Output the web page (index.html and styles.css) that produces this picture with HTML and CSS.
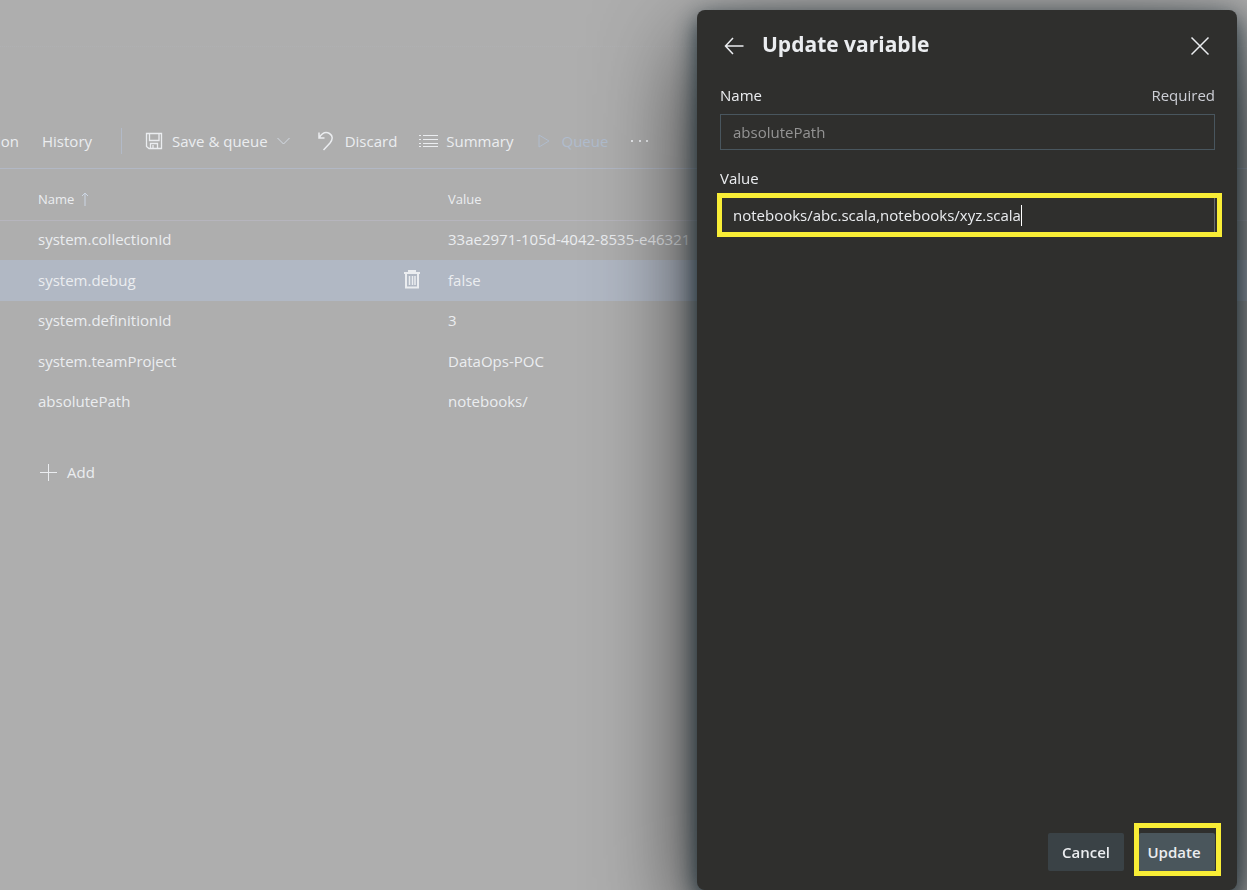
FILE: index.html
```html
<!DOCTYPE html>
<html lang="en">
<head>
<meta charset="utf-8">
<title>Update variable</title>
<link rel="stylesheet" href="styles.css">
</head>
<body>
<main class="page">
  <header class="page-header"></header>
  <nav class="toolbar" aria-label="Pipeline">
    <a class="tab tab-cut" href="#">ion</a>
    <a class="tab tab-history" href="#">History</a>
    <span class="divider"></span>
    <button class="tool save" type="button">
      <svg width="18" height="18" viewBox="0 0 18 18"><path d="M1.500 1.500H16.500V16.500H4L1.500 14.500ZM4.500 1.500V8.500H14V1.500M5.500 16.500V11.500H12.500V16.500M8 13V16" stroke-width="1.300"/></svg>
      <span>Save &amp; queue</span>
      <svg class="chevron" width="13" height="8" viewBox="0 0 13 8"><path d="M.5 1L6.500 7L12.500 1"/></svg>
    </button>
    <button class="tool discard" type="button">
      <svg width="16" height="20" viewBox="0 0 16 20"><path d="M1 1.500V7H6.500M1 7C4 2 8 .5 11.500 2.500C15.500 5 14.500 9 12 12L5.500 19" stroke-width="1.500"/></svg>
      <span>Discard</span>
    </button>
    <button class="tool summary" type="button">
      <svg width="19" height="14" viewBox="0 0 19 14"><path d="M4 1.500H19M4 5.500H19M4 9.500H19M4 12.500H19M0 1.500H2M0 5.500H2M0 9.500H2M0 12.500H2"/></svg>
      <span>Summary</span>
    </button>
    <button class="tool queue" type="button" disabled>
      <svg width="12" height="14" viewBox="0 0 12 14"><path d="M1 1V13L11 7Z"/></svg>
      <span>Queue</span>
    </button>
    <button class="tool more" type="button" aria-label="More actions">
      <svg width="18" height="4" viewBox="0 0 18 4"><path class="solid" d="M0 1H2V3H0ZM8 1H10V3H8ZM15 1H17V3H15Z"/></svg>
    </button>
  </nav>
  <table class="variables">
    <thead>
      <tr>
        <th class="col-name">Name <svg class="sort" width="8" height="14" viewBox="0 0 8 14"><path d="M4 14V1M1 4L4 1L7 4"/></svg></th>
        <th class="col-action"></th>
        <th>Value</th>
      </tr>
    </thead>
    <tbody>
      <tr><td>system.collectionId</td><td></td><td>33ae2971-105d-4042-8535-e46321</td></tr>
      <tr class="selected"><td>system.debug</td><td class="action"><button class="delete" type="button" aria-label="Delete">
        <svg width="16" height="19" viewBox="0 0 16 19"><path d="M0 3H16M5 3V1H11V3" stroke-width="2"/><path d="M2 3V17.500H14V3" stroke-width="2"/><path d="M5.500 6V15M8.500 6V15M11 6V15" stroke-width="1.500"/></svg>
      </button></td><td>false</td></tr>
      <tr><td>system.definitionId</td><td></td><td>3</td></tr>
      <tr><td>system.teamProject</td><td></td><td>DataOps-POC</td></tr>
      <tr><td>absolutePath</td><td></td><td>notebooks/</td></tr>
    </tbody>
  </table>
  <button class="add" type="button">
    <svg width="17" height="17" viewBox="0 0 17 17"><path d="M8.500 0V17M0 8.500H17"/></svg>
    <span>Add</span>
  </button>
</main>

<aside class="panel" role="dialog" aria-labelledby="title">
  <header class="panel-header">
    <button class="icon" type="button" aria-label="Back">
      <svg width="20" height="18" viewBox="0 0 20 18"><path d="M9 1L1.500 9L9 17M1.500 9H19.500" stroke-width="1.500"/></svg>
    </button>
    <h1 id="title">Update variable</h1>
    <button class="icon" type="button" aria-label="Close">
      <svg width="20" height="20" viewBox="0 0 20 20"><path d="M1.500 1.500L18.500 18.500M18.500 1.500L1.500 18.500" stroke-width="1.500"/></svg>
    </button>
  </header>
  <form class="form">
    <div class="label-row"><label for="name">Name</label><span class="required">Required</span></div>
    <input class="field" id="name" type="text" value="absolutePath" disabled>
    <div class="label-row"><label for="value">Value</label></div>
    <div class="field field-active marked">
      <input class="bare" id="value" type="text" value="notebooks/abc.scala,notebooks/xyz.scala"><span class="caret"></span>
    </div>
    <footer class="actions">
      <button class="btn" type="button">Cancel</button>
      <button class="btn btn-primary marked" type="button">Update</button>
    </footer>
  </form>
</aside>
</body>
</html>
```
FILE: styles.css
```css
* { box-sizing: border-box; }

body {
  margin: 0;
  min-height: 100vh;
  overflow: hidden;
  background: #aeaeae;
  color: #ebedf0;
  font: 15px/20px "Open Sans", "Noto Sans", sans-serif;
}

button, input { font: inherit; color: inherit; }
button { padding: 0; border: 0; background: none; }
svg { display: block; flex: none; fill: none; stroke: currentColor; }
.solid { fill: currentColor; stroke: none; }

.page-header { height: 47px; border-bottom: 1px dotted #b0b1b3; }
.toolbar {
  display: flex;
  align-items: center;
  height: 122px;
  padding-top: 67px;
  padding-bottom: 1px;
  border-bottom: 1px solid #b2b8c5;
  white-space: nowrap;
}
.tab { color: inherit; text-decoration: none; }
.tab-cut { margin-left: -3px; }
.tab-history { margin-left: 23px; }
.divider { height: 26px; margin: 0 23px 0 29px; border-left: 1px solid #b2bac8; }
.tool { display: flex; align-items: center; gap: 9px; }
.discard { margin-left: 28px; gap: 11px; }
.summary { margin-left: 22px; gap: 8px; }
.queue { margin-left: 24px; gap: 12px; color: #b0bccd; }
.more { margin-left: 23px; }
.chevron { color: #d3dae3; }

.variables { width: 100%; border-collapse: collapse; table-layout: fixed; }
.variables th, .variables td { padding: 0; text-align: left; white-space: nowrap; }
.variables th { height: 51px; padding-top: 10px; font-size: 13px; font-weight: 400; border-bottom: 1px solid #b6b5bd; }
.variables td { height: 40px; padding-bottom: 2px; }
.variables tr:nth-child(even) td { height: 41px; }
.variables th:first-child, .variables td:first-child { padding-left: 38px; }
.col-name { width: 404px; }
.col-action { width: 44px; }
.sort { display: inline-block; margin-left: 3px; vertical-align: -2px; color: #ccd6e4; }
.selected { background: #b1b8c4; }
.delete { display: block; }
.add { display: flex; align-items: center; gap: 10px; margin: 40px 0 0 40px; }

.panel {
  position: fixed;
  top: 10px;
  right: 10px;
  bottom: 0;
  width: min(540px, 100%);
  display: flex;
  flex-direction: column;
  padding: 19px 22px 19px 22px;
  border-radius: 8px;
  background: #2f2f2d;
  box-shadow: 0 8px 24px rgba(20, 40, 50, .9), 0 36px 100px rgba(0, 0, 0, .8);
}
.panel-header { display: flex; align-items: center; padding: 0 5px; }
.panel-header h1 { flex: 1; margin: 0 0 0 18px; font-size: 21px; line-height: 30px; font-weight: 700; }
.icon { padding-top: 4px; }
.form { display: flex; flex: 1; flex-direction: column; padding-left: 1px; }
.label-row { display: flex; justify-content: space-between; padding: 15px 0 9px; }
.panel-header + .form .label-row:first-child { padding-top: 26px; }
.panel label { font-weight: 500; }
.required { color: #cdcfd6; }
.field { width: 100%; height: 36px; padding: 0 12px; border: 1px solid #49565e; background: transparent; }
.field:disabled { color: #949494; }
.label-row + .field:disabled { margin-bottom: 3px; }
.field-active { display: flex; align-items: center; border-color: #65696b; }
.bare { field-sizing: content; padding: 0; border: 0; outline: 0; background: none; }
.caret { width: 1px; height: 21px; background: #fff; }
.marked { position: relative; }
.marked::after { content: ""; position: absolute; inset: -5px -8px -5px -4px; border: 5px solid #f8ed36; pointer-events: none; }
.actions { display: flex; justify-content: flex-end; gap: 15px; margin-top: auto; }
.btn { width: 76px; height: 38px; border-radius: 2px; background: #3a4246; font-weight: 600; }
.btn-primary { padding-right: 6px; background: #4a565c; }
.btn-primary::after { inset: -10px -6px -5px -5px; }
```
